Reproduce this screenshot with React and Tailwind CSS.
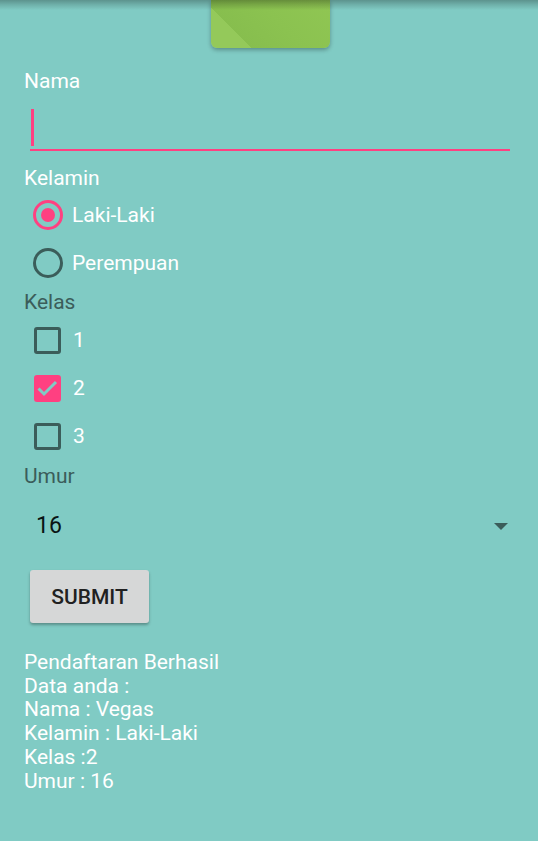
import React from "react";

const font = { fontFamily: "Roboto, 'Noto Sans', sans-serif" };

function Radio({ checked, label }) {
  return (
    <div className="flex items-center h-full">
      <div
        className={
          "ml-[33px] w-[30px] h-[30px] rounded-full border-[3px] flex items-center justify-center " +
          (checked ? "border-[#ff4081]" : "border-[#3b5d5a]")
        }
      >
        {checked && <div className="w-[14px] h-[14px] rounded-full bg-[#ff4081]" />}
      </div>
      <span className="ml-[9px] text-white text-[21px] leading-[24px]">{label}</span>
    </div>
  );
}

function Check({ checked, label }) {
  return (
    <div className="flex items-center h-[48px]">
      <div
        className={
          "ml-[34px] w-[27px] h-[27px] rounded-[3px] flex items-center justify-center " +
          (checked ? "bg-[#ff4081]" : "border-[3px] border-[#3b5d5a]")
        }
      >
        {checked && (
          <svg width="27" height="27" viewBox="0 0 27 27">
            <path d="M4.5 13.5 L10 19 L22 7" fill="none" stroke="#80cbc4" strokeWidth="3" />
          </svg>
        )}
      </div>
      <span className="ml-[12px] text-white text-[21px] leading-[24px]">{label}</span>
    </div>
  );
}

export default function App() {
  return (
    <div className="relative w-[538px] h-[841px] bg-[#80cbc4] overflow-hidden" style={font}>
      <div className="h-[48px] flex">
        <div className="ml-[211px] w-[119px] h-[48px] rounded-b-[6px] shadow-[0_2px_4px_rgba(0,0,0,0.3)] bg-[linear-gradient(45deg,#94c95a_0%,#94c95a_24%,#87be4e_24.5%,#8bc250_55%,#90c653_100%)]" />
      </div>

      <div className="mt-[21px] ml-[24px] text-white text-[21px] leading-[24px]">Nama</div>

      <div className="ml-[30px] mr-[28px]">
        <div className="ml-[1px] mt-[16px] w-[3px] h-[37px] bg-[#ff4081]" />
        <div className="mt-[3px] h-[2px] bg-[#ff4081]" />
      </div>

      <div className="mt-[15px] ml-[24px] text-white text-[21px] leading-[24px]">Kelamin</div>
      <div className="h-[50px]">
        <Radio checked label="Laki-Laki" />
      </div>
      <div className="h-[46px]">
        <Radio label="Perempuan" />
      </div>

      <div className="mt-[4px] ml-[24px] text-[#3b5d5a] text-[21px] leading-[24px]">Kelas</div>
      <div className="mt-[2px]">
        <Check label="1" />
        <Check checked label="2" />
        <Check label="3" />
      </div>

      <div className="mt-[4px] ml-[24px] text-[#3b5d5a] text-[21px] leading-[24px]">Umur</div>
      <div className="h-[76px] flex items-center justify-between">
        <span className="ml-[36px] text-[#0a1413] text-[23px] leading-[28px]">16</span>
        <svg className="mr-[30px]" width="14" height="7" viewBox="0 0 14 7">
          <path d="M0 0 L14 0 L7 7 Z" fill="#3b5d5a" />
        </svg>
      </div>

      <div className="mt-[6px] ml-[30px] w-[119px] h-[53px] rounded-[3px] bg-[#d6d7d7] shadow-[0_2px_3px_rgba(0,0,0,0.3)] flex items-center justify-center">
        <span className="text-[#212121] text-[21px] font-medium leading-[24px]">SUBMIT</span>
      </div>

      <div className="mt-[28px] ml-[24px] text-white text-[21px] leading-[23.7px]">
        <div>Pendaftaran Berhasil</div>
        <div>Data anda :</div>
        <div>Nama : Vegas</div>
        <div>Kelamin : Laki-Laki</div>
        <div>Kelas :2</div>
        <div>Umur : 16</div>
      </div>

      <div className="absolute top-0 left-0 right-0 h-[10px] bg-[linear-gradient(to_bottom,rgba(0,0,0,0.28),rgba(0,0,0,0.14)_45%,rgba(0,0,0,0))]" />
    </div>
  );
}
